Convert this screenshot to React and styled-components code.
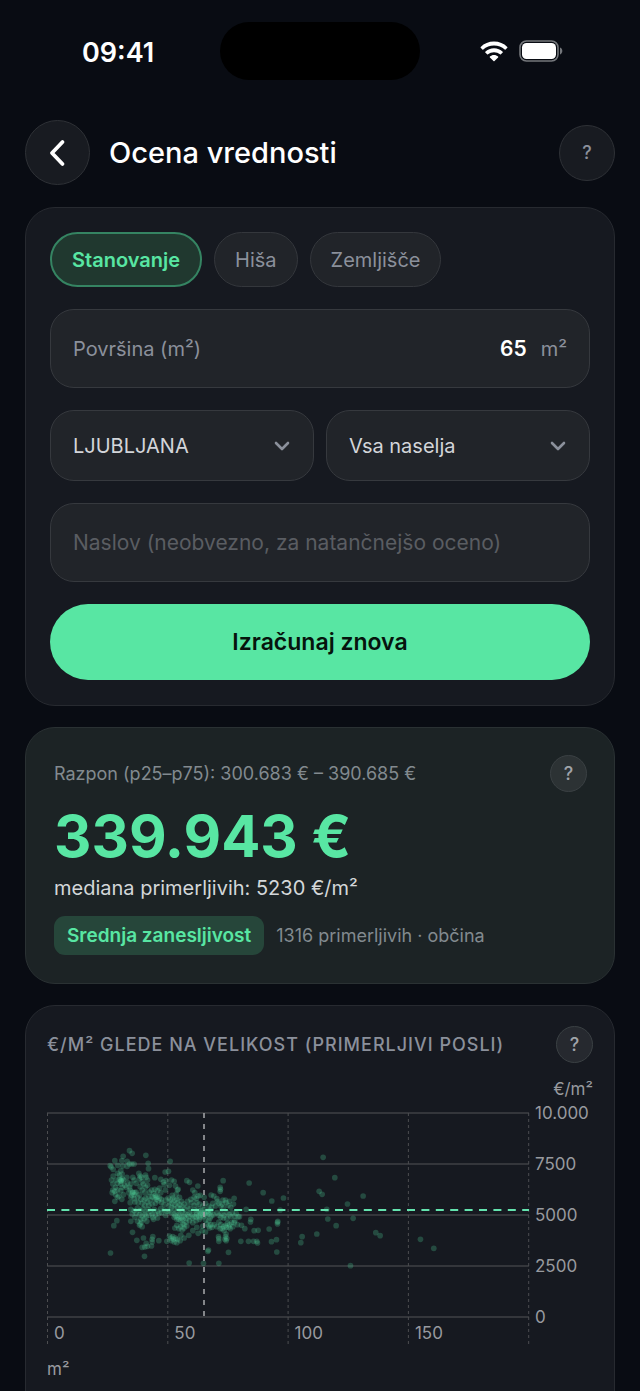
import React, { useState } from 'react';
import styled, { createGlobalStyle, css } from 'styled-components';

const GREEN = '#58e6a3';
const MUTED = '#8b909b';

const GlobalStyle = createGlobalStyle`
  * {
    box-sizing: border-box;
  }

  body {
    margin: 0;
    background: #090c13;
    color: #fff;
    font-family: Inter, 'Liberation Sans', sans-serif;
  }

  button,
  input,
  select {
    font-family: inherit;
    margin: 0;
  }
`;

const Screen = styled.div`
  height: 100vh;
  overflow: hidden;
  background: #090c13;
`;

const StatusBar = styled.div`
  display: grid;
  grid-template-columns: 1fr 200px 1fr;
  align-items: center;
  padding: 22px 25px 0;
`;

const Time = styled.div`
  padding: 3px 0 0 57px;
  font-size: 27px;
  line-height: 32px;
  font-weight: 600;
`;

const Island = styled.div`
  height: 58px;
  border-radius: 29px;
  background: #000;
`;

const StatusIcons = styled.div`
  display: flex;
  align-items: center;
  justify-content: flex-end;
  gap: 11px;
  padding-right: 52px;
`;

const Header = styled.header`
  display: flex;
  align-items: center;
  gap: 19px;
  padding: 40px 25px 22px;
`;

const RoundButton = styled.button`
  display: flex;
  flex: none;
  align-items: center;
  justify-content: center;
  width: ${(p) => p.$size}px;
  height: ${(p) => p.$size}px;
  padding: 0;
  border: 1px solid ${(p) => (p.$small ? '#3a4043' : '#2e3136')};
  border-radius: 50%;
  background: ${(p) => (p.$small ? 'rgba(255, 255, 255, 0.07)' : '#181b21')};
  color: ${(p) => (p.$small ? '#a0a4aa' : MUTED)};
  font-size: 18px;
  font-weight: 500;
  cursor: pointer;
`;

const Title = styled.h1`
  flex: 1;
  margin: 0;
  font-size: 29px;
  line-height: 36px;
  font-weight: 500;
`;

const Content = styled.main`
  display: flex;
  flex-direction: column;
  gap: 21px;
  padding: 0 25px;
`;

const Card = styled.section`
  border: 1px solid #272a30;
  border-radius: 30px;
  background: #161920;
`;

const FormCard = styled(Card)`
  display: flex;
  flex-direction: column;
  gap: 22px;
  padding: 24px 24px 25px;
`;

const Chips = styled.div`
  display: flex;
  gap: 12px;
`;

const Chip = styled.button`
  height: 55px;
  padding: 0 20px;
  border: 1px solid #34373c;
  border-radius: 28px;
  background: #212429;
  color: ${MUTED};
  font-size: 20px;
  cursor: pointer;

  ${(p) =>
    p.$active &&
    css`
      border: 2px solid #358462;
      background: #20382f;
      color: ${GREEN};
      font-weight: 600;
    `}
`;

const fieldBox = css`
  border: 1px solid #36393e;
  border-radius: 24px;
  background: #212429;
`;

const Field = styled.label`
  ${fieldBox}
  display: flex;
  align-items: center;
  height: 79px;
  padding: 0 22px;
  color: ${MUTED};
  font-size: 20px;
`;

const FieldInput = styled.input`
  flex: 1;
  min-width: 0;
  padding: 0;
  border: none;
  outline: none;
  background: none;
  color: #fff;
  font-size: 21px;

  &::placeholder {
    color: #5a5d62;
    opacity: 1;
  }
`;

const NumberInput = styled(FieldInput)`
  margin-right: 14px;
  text-align: right;
  font-weight: 600;
`;

const Row = styled.div`
  display: grid;
  grid-template-columns: 1fr 1fr;
  gap: 12px;
`;

const SelectBox = styled.div`
  ${fieldBox}
  display: grid;
  grid-template-columns: 1fr auto;
  align-items: center;
  height: 71px;
  padding-right: 23px;

  svg {
    grid-area: 1 / 2;
    pointer-events: none;
  }
`;

const Select = styled.select`
  grid-area: 1 / 1 / 2 / 3;
  height: 100%;
  padding: 0 22px;
  border: none;
  outline: none;
  background: none;
  color: #d3d5d9;
  font-size: 20px;
  appearance: none;
`;

const Submit = styled.button`
  height: 76px;
  border: none;
  border-radius: 38px;
  background: ${GREEN};
  color: #06140d;
  font-size: 23px;
  font-weight: 600;
  cursor: pointer;
`;

const ResultCard = styled(Card)`
  padding: 27px 27px 28px 28px;
  border-color: #2a3133;
  background: #1c2325;
`;

const CardHead = styled.div`
  display: flex;
  align-items: center;
  justify-content: space-between;
`;

const Range = styled.div`
  color: #828a8f;
  font-size: 18px;
`;

const Price = styled.div`
  margin-top: 12px;
  color: ${GREEN};
  font-size: 58px;
  line-height: 64px;
  font-weight: 700;
`;

const Median = styled.div`
  margin-top: 7px;
  color: #d3d7d9;
  font-size: 20px;
  line-height: 26px;
`;

const Confidence = styled.div`
  display: flex;
  align-items: center;
  gap: 12px;
  margin-top: 15px;
  color: #828a8f;
  font-size: 18px;
`;

const Badge = styled.span`
  padding: 0 13px;
  border-radius: 11px;
  background: #26463a;
  color: ${GREEN};
  font-size: 19px;
  line-height: 39px;
  font-weight: 600;
`;

const ChartCard = styled(Card)`
  padding: 20px 21px 40px;
`;

const ChartTitle = styled.h2`
  margin: 0;
  color: ${MUTED};
  font-size: 18px;
  font-weight: 500;
  letter-spacing: 1px;
  text-transform: uppercase;
`;

const Unit = styled.div`
  color: #989a9f;
  font-size: 17px;
  line-height: 22px;
  text-align: ${(p) => p.$align};
`;

const TopUnit = styled(Unit)`
  margin-top: 15px;
`;

const BottomUnit = styled(Unit)`
  margin-top: 12px;
`;

const Plot = styled.svg`
  display: block;
  width: 100%;
  overflow: visible;

  text {
    fill: #989a9f;
    font-size: 17px;
  }
`;

// comparable sales, three plot units per pixel, origin at the top left
const SALES = [
  [246,113],[254,121],[227,130],[295,127],[202,143],[188,158],[191,162],[223,143],[239,145],[246,153],
  [260,153],[253,153],[239,160],[302,151],[303,167],[368,145],[197,169],[211,157],[226,159],[363,175],
  [353,177],[220,173],[224,183],[216,187],[210,181],[197,189],[192,201],[206,201],[220,201],[222,203],
  [228,201],[238,193],[220,213],[210,211],[196,213],[232,217],[224,223],[204,223],[196,231],[202,235],
  [210,231],[220,233],[194,239],[204,245],[214,249],[210,253],[202,265],[228,245],[223,259],[236,223],
  [240,209],[278,189],[282,193],[276,197],[296,193],[300,201],[274,181],[294,186],[256,193],[260,201],
  [266,211],[250,213],[246,223],[284,206],[288,213],[294,223],[300,217],[278,221],[284,231],[292,239],
  [256,237],[248,231],[244,239],[260,245],[252,247],[266,237],[276,245],[270,253],[260,257],[250,253],
  [280,259],[322,194],[340,199],[348,207],[356,203],[350,215],[372,201],[380,205],[366,217],[384,219],
  [392,229],[390,231],[386,243],[354,231],[340,239],[418,203],[426,208],[436,231],[451,219],[442,239],
  [452,249],[440,253],[446,257],[458,247],[430,259],[470,253],[491,246],[508,257],[499,249],[518,223],
  [519,229],[518,235],[527,203],[605,210],[647,239],[673,264],[560,256],[526,261],[510,265],[496,271],
  [708,255],[306,237],[312,231],[322,229],[330,233],[336,225],[318,241],[324,247],[330,251],[336,255],
  [326,259],[320,255],[314,251],[342,259],[332,263],[308,261],[300,267],[290,261],[294,255],[304,251],
  [248,269],[262,267],[272,269],[284,271],[292,277],[304,277],[314,273],[324,271],[342,269],[350,275],
  [354,261],[362,255],[370,261],[376,255],[382,261],[366,267],[374,271],[382,275],[390,269],[396,275],
  [364,279],[372,283],[380,287],[390,283],[398,287],[388,259],[374,247],[396,253],[402,265],[410,273],
  [420,265],[432,269],[440,277],[448,269],[456,273],[466,279],[474,271],[484,279],[492,283],[504,279],
  [514,271],[520,279],[528,285],[536,269],[542,277],[550,283],[558,273],[534,261],[546,265],[524,273],
  [420,281],[428,287],[412,289],[404,281],[442,291],[452,287],[460,293],[470,289],[480,295],[490,297],
  [250,289],[260,293],[270,285],[278,293],[286,287],[294,295],[302,289],[310,295],[320,289],[330,295],
  [340,287],[350,291],[358,295],[342,299],[254,303],[266,301],[276,305],[284,309],[292,303],[304,307],
  [314,303],[324,305],[334,301],[364,295],[372,299],[380,303],[388,297],[396,303],[404,297],[412,303],
  [384,309],[390,313],[396,309],[402,315],[394,319],[400,323],[406,319],[388,319],[380,313],[410,311],
  [420,305],[426,299],[434,305],[440,311],[448,305],[454,309],[460,303],[466,307],[472,303],[468,311],
  [458,313],[446,313],[434,315],[424,311],[416,317],[478,307],[484,303],[492,309],[498,305],[488,315],
  [508,299],[514,307],[522,301],[530,307],[538,299],[546,305],[554,299],[566,301],[572,311],[528,315],
  [538,317],[550,311],[520,313],[562,309],[262,313],[280,319],[290,317],[296,311],[278,333],[282,327],
  [270,325],[318,319],[298,325],[330,315],[316,313],[354,307],[208,323],[199,338],[250,325],[284,341],
  [276,337],[255,358],[268,382],[288,375],[314,379],[316,371],[334,383],[314,387],[284,403],[292,402],
  [300,400],[312,399],[296,391],[189,420],[291,430],[358,385],[370,375],[376,371],[378,379],[384,375],
  [390,379],[372,383],[380,387],[388,389],[366,369],[400,367],[398,383],[410,375],[424,367],[404,351],
  [394,347],[400,341],[410,345],[418,339],[406,333],[416,327],[426,323],[436,329],[446,323],[456,319],
  [410,335],[382,345],[388,337],[436,353],[452,361],[464,353],[474,357],[448,343],[466,339],[478,333],
  [484,339],[490,335],[494,343],[486,345],[474,321],[484,323],[500,335],[508,341],[514,327],[520,335],
  [528,341],[524,347],[534,337],[540,331],[546,335],[552,329],[536,343],[530,353],[518,347],[544,343],
  [548,347],[556,341],[560,329],[570,335],[582,337],[536,363],[534,371],[538,377],[532,379],[514,377],
  [514,385],[513,371],[536,383],[576,311],[580,385],[610,319],[609,327],[592,347],[620,353],[632,352],
  [603,385],[618,385],[628,385],[630,390],[665,348],[690,328],[690,333],[691,325],[672,386],[687,380],
  [688,417],[543,418],[483,411],[481,415],[425,450],[468,451],[514,451],[596,289],[562,323],[698,291],
  [827,133],[862,194],[815,235],[824,244],[947,249],[900,273],[838,289],[841,318],[917,316],[866,338],
  [808,363],[764,371],[760,389],[985,359],[998,368],[1119,379],[1159,406],[909,458],[472,297],[464,297],
  [482,299],[488,291],[456,297],[448,299],[220,205],[216,199],[224,197],[255,239],[262,239],[326,253],
];

const Y_TICKS = ['10.000', '7500', '5000', '2500', '0'];
const X_TICKS = ['0', '50', '100', '150', ''];

function Chart() {
  return (
    <Plot viewBox="0 0 546 246" role="img" aria-label="€/m² glede na velikost">
      {Y_TICKS.map((t, i) => (
        <g key={t}>
          <line x1="0" x2="482" y1={13 + i * 51} y2={13 + i * 51} stroke="#3f4145" strokeWidth="1.6" />
          <text x="488" y={19 + i * 51}>{t}</text>
        </g>
      ))}
      {X_TICKS.map((t, i) => (
        <g key={i}>
          <line
            x1={0.5 + i * 120.3}
            x2={0.5 + i * 120.3}
            y1="13"
            y2="244"
            stroke="#4c4d50"
            strokeDasharray="3 3"
          />
          <text x={7 + i * 120.3} y="239">{t}</text>
        </g>
      ))}
      <g transform="translate(0.5 13) scale(0.3333)" fill="#4fcf98" fillOpacity="0.27">
        {SALES.map(([x, y], i) => (
          <circle key={i} cx={x} cy={y} r="8.5" />
        ))}
      </g>
      <line x1="0" x2="482" y1="110" y2="110" stroke="#64e3ae" strokeWidth="2" strokeDasharray="8 6.4" />
      <line x1="157" x2="157" y1="13" y2="217" stroke="#a0a2a5" strokeWidth="1.6" strokeDasharray="5 6" />
    </Plot>
  );
}

const WifiIcon = () => (
  <svg width="28" height="21" viewBox="0 0 28 21" fill="#fff" aria-hidden="true">
    <path d="M14 0.6C8.8 0.6 4.1 2.6 0.7 5.9c-.3.3-.3.6 0 .9l1.7 1.7c.3.3.6.3.9 0C6.1 5.9 9.9 4.6 14 4.6s7.9 1.3 10.700 3.900c.3.3.6.3.9 0l1.700-1.700c.3-.3.3-.6 0-.9C23.900 2.600 19.200.600 14 .600z" />
    <path d="M14 7.300c-3.400 0-6.400 1.300-8.700 3.400-.3.300-.3.600 0 .900l1.800 1.700c.3.300.6.300.9 0 1.600-1.400 3.700-2.100 6-2.100s4.400.700 6 2.100c.3.300.6.300.9 0l1.800-1.700c.3-.3.3-.6 0-.9-2.300-2.100-5.300-3.400-8.700-3.400z" />
    <path d="M14 14c-1.600 0-3 .600-4.100 1.500-.3.300-.3.600 0 .9l3.600 3.600c.3.300.7.300 1 0l3.600-3.600c.3-.3.3-.6 0-.9C17 14.600 15.600 14 14 14z" />
  </svg>
);

const BatteryIcon = () => (
  <svg width="44" height="22" viewBox="0 0 44 22" aria-hidden="true">
    <rect x="1" y="1" width="38" height="20" rx="6.5" fill="none" stroke="#74777b" strokeWidth="1.6" />
    <rect x="3" y="3" width="34" height="16" rx="4.5" fill="#fff" />
    <path d="M41 7.5c1.5.6 2.3 1.9 2.3 3.5s-.8 2.9-2.3 3.500z" fill="#74777b" />
  </svg>
);

const BackIcon = () => (
  <svg width="20" height="30" viewBox="0 0 20 30" fill="none" aria-hidden="true">
    <path d="M14.500 4 4 15l10.500 11" stroke="#fff" strokeWidth="3.8" strokeLinecap="round" strokeLinejoin="round" />
  </svg>
);

const ChevronIcon = () => (
  <svg width="16" height="10" viewBox="0 0 16 10" fill="none" aria-hidden="true">
    <path d="m2 2 6 6 6-6" stroke={MUTED} strokeWidth="2.6" strokeLinecap="round" strokeLinejoin="round" />
  </svg>
);

const TYPES = ['Stanovanje', 'Hiša', 'Zemljišče'];

const App = () => {
  const [type, setType] = useState('Stanovanje');
  const [area, setArea] = useState('65');
  const [address, setAddress] = useState('');

  return (
    <Screen>
      <GlobalStyle />
      <StatusBar>
        <Time>09:41</Time>
        <Island />
        <StatusIcons>
          <WifiIcon />
          <BatteryIcon />
        </StatusIcons>
      </StatusBar>
      <Header>
        <RoundButton $size={65} aria-label="Nazaj">
          <BackIcon />
        </RoundButton>
        <Title>Ocena vrednosti</Title>
        <RoundButton $size={56}>?</RoundButton>
      </Header>
      <Content>
        <FormCard>
          <Chips>
            {TYPES.map((t) => (
              <Chip key={t} $active={t === type} aria-pressed={t === type} onClick={() => setType(t)}>
                {t}
              </Chip>
            ))}
          </Chips>
          <Field>
            Površina (m²)
            <NumberInput inputMode="numeric" value={area} onChange={(e) => setArea(e.target.value)} />
            m²
          </Field>
          <Row>
            <SelectBox>
              <Select aria-label="Občina">
                <option>LJUBLJANA</option>
              </Select>
              <ChevronIcon />
            </SelectBox>
            <SelectBox>
              <Select aria-label="Naselje">
                <option>Vsa naselja</option>
              </Select>
              <ChevronIcon />
            </SelectBox>
          </Row>
          <Field>
            <FieldInput
              aria-label="Naslov"
              placeholder="Naslov (neobvezno, za natančnejšo oceno)"
              value={address}
              onChange={(e) => setAddress(e.target.value)}
            />
          </Field>
          <Submit>Izračunaj znova</Submit>
        </FormCard>

        <ResultCard>
          <CardHead>
            <Range>Razpon (p25–p75): 300.683 € – 390.685 €</Range>
            <RoundButton $size={37} $small>?</RoundButton>
          </CardHead>
          <Price>339.943 €</Price>
          <Median>mediana primerljivih: 5230 €/m²</Median>
          <Confidence>
            <Badge>Srednja zanesljivost</Badge>
            <span>1316 primerljivih · občina</span>
          </Confidence>
        </ResultCard>

        <ChartCard>
          <CardHead>
            <ChartTitle>€/m² glede na velikost (primerljivi posli)</ChartTitle>
            <RoundButton $size={37} $small>?</RoundButton>
          </CardHead>
          <TopUnit $align="right">€/m²</TopUnit>
          <Chart />
          <BottomUnit $align="left">m²</BottomUnit>
        </ChartCard>
      </Content>
    </Screen>
  );
};

export default App;
